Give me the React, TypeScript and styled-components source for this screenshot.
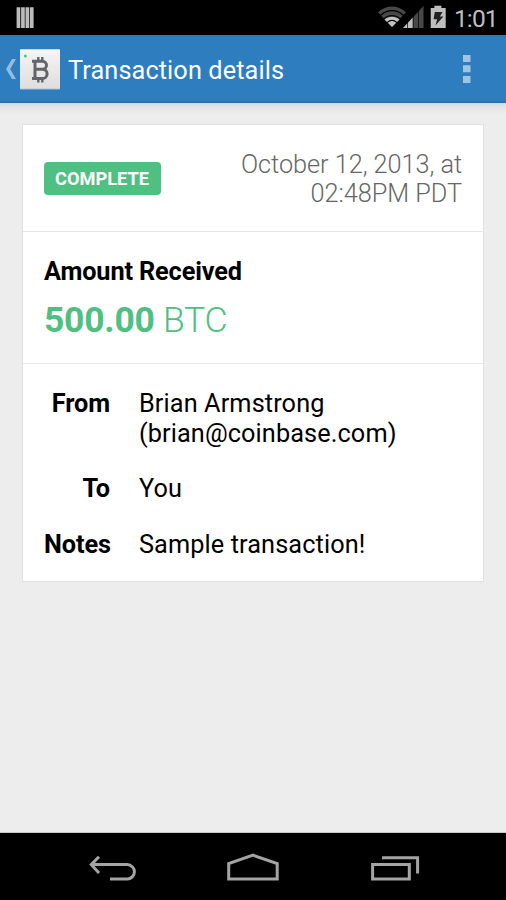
import React from "react";
import styled, { createGlobalStyle } from "styled-components";

const GlobalStyle = createGlobalStyle`
  * { box-sizing: border-box; }
  body { margin: 0; background: #ededed; font-family: Roboto, "Liberation Sans", sans-serif; }
  svg { display: block; flex: none; }
`;

const Screen = styled.div`
  display: flex;
  flex-direction: column;
  width: 506px;
  height: 900px;
  overflow: hidden;
  background: #ededed;
`;

const StatusBar = styled.header`
  display: flex;
  flex: none;
  align-items: center;
  justify-content: space-between;
  height: 35px;
  background: #000;
`;

const StatusIcons = styled.div`
  display: flex;
  align-items: center;
  width: 130px;
`;

const Clock = styled.span`
  margin: 2px 0 0 6px;
  color: #bebebe;
  font-size: 24.5px;
  line-height: 35px;
  letter-spacing: -0.9px;
  white-space: nowrap;
`;

const ActionBar = styled.nav`
  display: flex;
  flex: none;
  align-items: center;
  height: 68px;
  padding: 0 30px 0 4px;
  background: #2d7dbf;
  border-bottom: 2px solid #2a72b1;
`;

const Title = styled.h1`
  flex: 1;
  margin: 5px 0 0 8px;
  color: #fff;
  font-size: 25.3px;
  font-weight: 400;
  line-height: 30px;
  letter-spacing: 0.1px;
  white-space: nowrap;
`;

const Content = styled.main`
  flex: 1;
  padding: 21px 21px 0 22px;
  background: linear-gradient(#d8d8d8, #e6e6e6 5px, #ededed 12px);
  border-bottom: 1px solid #c8c8c8;
`;

const Card = styled.article`
  width: 462px;
  height: 458px;
  background: #fff;
  border: 1px solid #e0e0e0;
`;

const Summary = styled.section`
  display: flex;
  align-items: center;
  justify-content: space-between;
  height: 107px;
  padding: 0 21px;
  border-bottom: 1px solid #e6e6e6;
`;

const Badge = styled.span`
  width: 117px;
  height: 33px;
  padding-right: 1px;
  border-radius: 4px;
  background: #4fbf82;
  color: #fff;
  font-size: 18.2px;
  font-weight: 700;
  line-height: 34px;
  text-align: center;
`;

const DateText = styled.time`
  width: 240px;
  margin-top: 2px;
  color: #666;
  font-size: 25.3px;
  font-weight: 300;
  line-height: 29.5px;
  letter-spacing: -0.05px;
  text-align: right;
`;

const Amount = styled.section`
  height: 132px;
  padding: 25px 21px 0;
  border-bottom: 1px solid #e6e6e6;
`;

const Heading = styled.h2`
  margin: 0;
  font-size: 25.3px;
  font-weight: 700;
  line-height: 30px;
  letter-spacing: -0.14px;
`;

const Value = styled.p`
  margin: 12px 0 0;
  color: #4fbf82;
  font-size: 35.5px;
  font-weight: 300;
  line-height: 42px;
  letter-spacing: -0.25px;

  strong { font-weight: 700; }
`;

const Details = styled.dl`
  display: grid;
  grid-template-columns: 66px 1fr;
  gap: 26px 29px;
  margin: 0;
  padding: 25px 21px 0;
  font-size: 25.3px;
  line-height: 29.5px;
`;

const Label = styled.dt`
  font-weight: 700;
  letter-spacing: -0.1px;
  text-align: right;
`;

const Detail = styled.dd`
  margin: 0;
  letter-spacing: 0.1px;
  white-space: pre-line;
`;

const NavBar = styled.footer`
  display: flex;
  flex: none;
  justify-content: center;
  height: 67px;
  background: #000;
`;

const NotificationIcon = () => (
  <svg width="40" height="35" viewBox="0 0 40 35" fill="#bbb">
    <path d="M16.6 7.3h3.7V28h-3.7z M21.1 7.3h3.7V28h-3.7z M25.5 7.3h3.7V28h-3.7z M29.9 7.3h3.7V28h-3.7z" />
  </svg>
);

const SignalIcons = () => (
  <svg width="72" height="35" viewBox="376 0 72 35">
    <path d="M378 12.2C386 4.500 398 4.500 406 12.2L392 27z" fill="#484848" />
    <path d="M384.500 19.500C389 15.800 395 15.800 399.500 19.500L392 27z" fill="#c4c4c4" />
    <g fill="none" stroke="#000" strokeWidth="1.1">
      <path d="M380.400 15.500C387 9 397 9 403.600 15.500M383.700 19C388.500 14.500 395.500 14.500 400.300 19M387 22.600C390 20 394 20 397 22.600" />
    </g>
    <path d="M403 28L423.500 6V28z" fill="#484848" />
    <path d="M403 28L412.800 17.500V28z" fill="#bebebe" />
    <path d="M407.500 7V28M413.200 7V28M418.500 7V28" stroke="#000" strokeWidth=".7" />
    <path d="M430.700 8h3.700V5.800h7V8h4.300v20h-15z" fill="#bebebe" />
    <path d="M434.800 12h7.700l-2.600 4.600h3.500L435.500 25.500l1.600-6.200h-3.500z" fill="#222" />
  </svg>
);

const BackChevron = () => (
  <svg width="16" height="66" viewBox="4 35 16 66">
    <path d="M12 59h4l-5.800 10 5.800 10h-4L6 69z" fill="#93bcdd" />
  </svg>
);

const BitcoinIcon = () => (
  <svg width="40" height="66" viewBox="20 35 40 66">
    <defs>
      <linearGradient id="tile" x1="0" y1="0" x2="0" y2="1">
        <stop stopColor="#f5f5f5" />
        <stop offset="1" stopColor="#dedede" />
      </linearGradient>
    </defs>
    <rect x="20" y="50" width="40" height="39.500" rx="1" fill="#b6c4d0" />
    <rect x="20" y="49.300" width="40" height="39.200" rx="1" fill="url(#tile)" />
    <circle cx="25.400" cy="56" r="1.500" fill="#27d884" />
    <g fill="none" stroke="#62656a" strokeWidth="3">
      <path d="M32 61.300H42.500a4 4 0 0 1 0 8H35M42.500 69.300a4.600 4.600 0 0 1 0 9.200H32M35 61.300v17.200" />
      <path d="M38.300 57v4M42.300 57v4M38.300 79v3.600M42.300 79v3.600" strokeWidth="2.400" />
    </g>
  </svg>
);

const OverflowIcon = () => (
  <svg width="18" height="66" viewBox="458 35 18 66" fill="#a0c5e3">
    <path d="M463 55h7.500v7H463zM463 65.200h7.500v7H463zM463 76h7.500v7H463z" />
  </svg>
);

const NavIcons = () => (
  <svg width="506" height="67" viewBox="0 833 506 67" fill="none" stroke="#a4a4a4" strokeWidth="3">
    <path d="M91 864.600H127.200a7.200 7.200 0 0 1 0 14.400H110M99 856.700L91.200 864.600L99 873" />
    <path d="M228.700 879V863.500L253 855.200L277.200 863.500V879z" />
    <path d="M372.600 864.500H409.300V879H372.600zM382 857.700H417.600V873.500" />
  </svg>
);

const details = [
  { label: "From", value: "Brian Armstrong\n(brian@coinbase.com)" },
  { label: "To", value: "You" },
  { label: "Notes", value: "Sample transaction!" },
];

export default function App() {
  return (
    <Screen>
      <GlobalStyle />
      <StatusBar>
        <NotificationIcon />
        <StatusIcons>
          <SignalIcons />
          <Clock>1:01</Clock>
        </StatusIcons>
      </StatusBar>
      <ActionBar>
        <BackChevron />
        <BitcoinIcon />
        <Title>Transaction details</Title>
        <OverflowIcon />
      </ActionBar>
      <Content>
        <Card>
          <Summary>
            <Badge>COMPLETE</Badge>
            <DateText>October 12, 2013, at 02:48PM PDT</DateText>
          </Summary>
          <Amount>
            <Heading>Amount Received</Heading>
            <Value><strong>500.00</strong> BTC</Value>
          </Amount>
          <Details>
            {details.map(({ label, value }) => (
              <React.Fragment key={label}>
                <Label>{label}</Label>
                <Detail>{value}</Detail>
              </React.Fragment>
            ))}
          </Details>
        </Card>
      </Content>
      <NavBar>
        <NavIcons />
      </NavBar>
    </Screen>
  );
}
